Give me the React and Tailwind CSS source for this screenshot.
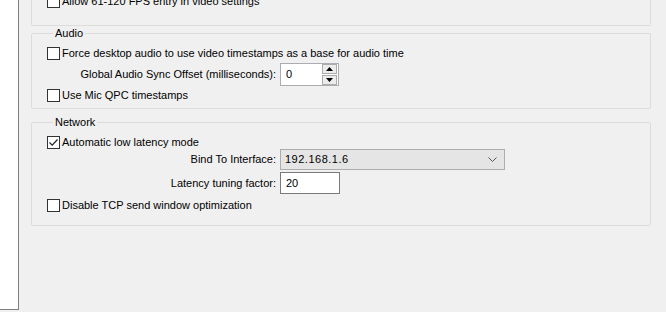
import React from 'react';

const font = { fontFamily: '"Liberation Sans", Arial, sans-serif' };

const CheckBox = ({ checked, label }) => (
  <div className="flex items-center h-[13px]">
    <div className="w-[13px] h-[13px] border border-[#333333] bg-white shrink-0 flex items-center justify-center">
      {checked && (
        <svg width="11" height="11" viewBox="0 0 11 11">
          <path d="M1.5 5.5 L4.2 8.2 L9.5 2.5" fill="none" stroke="#222" strokeWidth="1.2" />
        </svg>
      )}
    </div>
    <span className="ml-[2px] text-[11px] leading-[13px] text-black whitespace-nowrap">{label}</span>
  </div>
);

const Group = ({ title, className, children }) => (
  <fieldset className={`border border-[#dcdcdc] rounded-[2px] ${className}`}>
    <legend className="ml-[6px] px-[2px] text-[11px] leading-[13px] text-black">{title}</legend>
    {children}
  </fieldset>
);

export default function App() {
  return (
    <div className="w-[666px] h-[312px] bg-[#f0f0f0] flex overflow-hidden" style={font}>
      {/* left list pane */}
      <div className="w-[19px] h-[310px] bg-white border-r border-b border-[#7f7f7f] shrink-0" />

      <div className="flex flex-col w-[620px] ml-[12px]">
        {/* tail of the video group */}
        <div className="h-[26px] border-x border-b border-[#dcdcdc] rounded-b-[2px] pl-[15px]">
          <div className="-mt-[5px]">
            <CheckBox label="Allow 61-120 FPS entry in video settings" />
          </div>
        </div>

        <Group title="Audio" className="mt-[1px] h-[82px] pl-[15px]">
          <div className="mt-[7px]">
            <CheckBox label="Force desktop audio to use video timestamps as a base for audio time" />
          </div>
          <div className="flex items-center mt-[3px] -ml-[15px]">
            <span className="w-[244px] text-right text-[11px] text-black">Global Audio Sync Offset (milliseconds):</span>
            <div className="ml-[4px] w-[59px] h-[23px] bg-white border border-[#abadb3] flex items-center">
              <span className="ml-[5px] text-[11px] text-black flex-1">0</span>
              <div className="flex flex-col gap-[1px] mr-[1px]">
                <div className="w-[15px] h-[10px] bg-[#ececec] border border-[#acacac] flex items-center justify-center">
                  <svg width="7" height="4" viewBox="0 0 7 4"><path d="M0 4 L3.5 0 L7 4Z" fill="#000" /></svg>
                </div>
                <div className="w-[15px] h-[10px] bg-[#ececec] border border-[#acacac] flex items-center justify-center">
                  <svg width="7" height="4" viewBox="0 0 7 4"><path d="M0 0 L3.5 4 L7 0Z" fill="#000" /></svg>
                </div>
              </div>
            </div>
          </div>
          <div className="mt-[3px]">
            <CheckBox label="Use Mic QPC timestamps" />
          </div>
        </Group>

        <Group title="Network" className="mt-[7px] h-[110px] pl-[15px]">
          <div className="mt-[7px]">
            <CheckBox checked label="Automatic low latency mode" />
          </div>
          <div className="flex items-center mt-[0px] -ml-[15px]">
            <span className="w-[244px] text-right text-[11px] text-black">Bind To Interface:</span>
            <div className="ml-[4px] w-[225px] h-[21px] bg-[#e5e5e5] border border-[#adadad] flex items-center">
              <span className="ml-[4px] text-[11px] text-black flex-1 tracking-[0.5px]">192.168.1.6</span>
              <svg width="9" height="6" viewBox="0 0 9 6" className="mr-[7px]">
                <path d="M0.5 0.5 L4.5 4.5 L8.5 0.5" fill="none" stroke="#555" strokeWidth="1" />
              </svg>
            </div>
          </div>
          <div className="flex items-center mt-[2px] -ml-[15px]">
            <span className="w-[244px] text-right text-[11px] text-black">Latency tuning factor:</span>
            <div className="ml-[4px] w-[60px] h-[22px] bg-white border border-[#7a7a7a] flex items-center">
              <span className="ml-[5px] text-[11px] text-black">20</span>
            </div>
          </div>
          <div className="mt-[5px]">
            <CheckBox label="Disable TCP send window optimization" />
          </div>
        </Group>
      </div>
    </div>
  );
}
